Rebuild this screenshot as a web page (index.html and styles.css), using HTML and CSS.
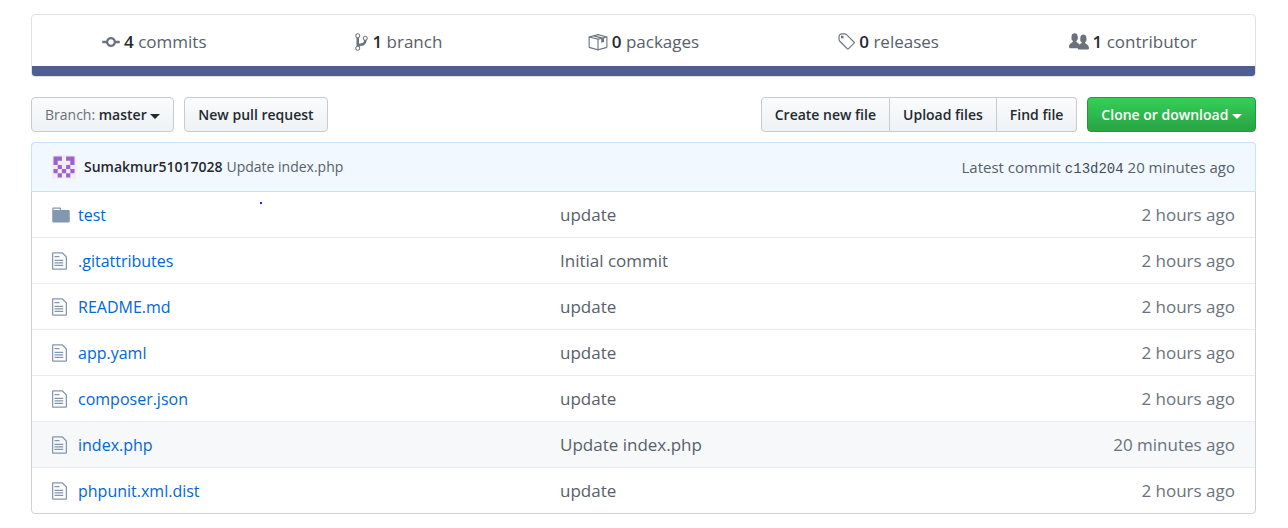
FILE: index.html
```html
<!DOCTYPE html>
<html lang="en">
<head>
<meta charset="utf-8">
<meta name="viewport" content="width=device-width, initial-scale=1">
<title>Repository files</title>
<link rel="stylesheet" href="styles.css">
</head>
<body>
<svg class="sprite" aria-hidden="true">
  <symbol id="file" viewBox="0 0 12 16"><path d="M6 5H2V4h4v1zM2 8h7V7H2v1zm0 2h7V9H2v1zm0 2h7v-1H2v1zm10-7.5V14c0 .55-.45 1-1 1H1c-.55 0-1-.45-1-1V2c0-.55.45-1 1-1h7.5L12 4.5zM11 5L8 2H1v12h10V5z"/></symbol>
</svg>
<main class="page">
  <section class="summary">
    <ul class="stats">
      <li><a class="stat" href="#"><svg class="icon" width="18" height="20" viewBox="0 0 14 16"><path d="M10.86 7c-.45-1.72-2-3-3.86-3-1.86 0-3.41 1.28-3.86 3H0v2h3.14c.45 1.72 2 3 3.86 3 1.86 0 3.41-1.28 3.86-3H14V7h-3.14zM7 10.2c-1.22 0-2.2-.98-2.2-2.2 0-1.22.98-2.2 2.2-2.2 1.22 0 2.2.98 2.2 2.2 0 1.22-.98 2.2-2.2 2.2z"/></svg><span><b>4</b> commits</span></a></li>
      <li><a class="stat" href="#"><svg class="icon" width="13" height="20" viewBox="0 0 10 16"><path d="M10 5c0-1.11-.89-2-2-2a1.993 1.993 0 00-1 3.72v.3c-.02.52-.23.98-.63 1.38-.4.4-.86.61-1.38.63-.83.02-1.48.16-2 .45V4.72a1.993 1.993 0 00-1-3.72C.88 1 0 1.89 0 3a2 2 0 001 1.72v6.56c-.59.35-1 .99-1 1.72 0 1.11.89 2 2 2 1.11 0 2-.89 2-2 0-.53-.2-1-.53-1.36.09-.06.48-.41.59-.47.25-.11.56-.17.94-.17 1.05-.05 1.95-.45 2.75-1.25S8.95 7.77 9 6.73h-.02C9.59 6.37 10 5.73 10 5zM2 1.8c.66 0 1.2.55 1.2 1.2 0 .65-.55 1.2-1.2 1.2C1.35 4.2.8 3.65.8 3c0-.65.55-1.2 1.2-1.2zm0 12.41c-.66 0-1.2-.55-1.2-1.2 0-.65.55-1.2 1.2-1.2.65 0 1.2.55 1.2 1.2 0 .65-.55 1.2-1.2 1.2zm6-8c-.66 0-1.2-.55-1.2-1.2 0-.65.55-1.2 1.2-1.2.65 0 1.2.55 1.2 1.2 0 .65-.55 1.2-1.2 1.2z"/></svg><span><b>1</b> branch</span></a></li>
      <li><a class="stat" href="#"><svg class="icon" width="20" height="20" viewBox="0 0 16 16"><path class="line" d="M.9 4 8 5.8v8.4l-6.5-1.7c-.4-.1-.6-.4-.6-.8zM15.1 4 8 5.8v8.4l6.5-1.7c.4-.1.6-.4.6-.8zM.9 4 8 2.1 15.1 4M4.4 3.1l7.1 1.8"/><path d="M10.6 5.1l2.2-.6v3.4l-2.2.6z"/></svg><span><b>0</b> packages</span></a></li>
      <li><a class="stat" href="#"><svg class="icon" width="18" height="20" viewBox="0 0 14 16"><path d="M7.73 1.73C7.26 1.26 6.62 1 5.96 1H3.5C2.13 1 1 2.13 1 3.5v2.47c0 .66.27 1.3.73 1.77l6.06 6.06c.39.39 1.02.39 1.41 0l4.59-4.59a.996.996 0 000-1.41L7.73 1.73zM2.38 7.09c-.31-.3-.47-.7-.47-1.13V3.5c0-.88.72-1.59 1.59-1.59h2.47c.42 0 .83.16 1.13.47l6.14 6.13-4.73 4.73-6.13-6.15zM3.01 3h2v2H3V3h.01z"/></svg><span><b>0</b> releases</span></a></li>
      <li><a class="stat" href="#"><svg class="icon" width="20" height="20" viewBox="0 0 16 16"><path d="M16 12.999c0 .439-.45 1-1 1H7.995c-.539 0-.994-.447-.995-.999H1c-.54 0-1-.561-1-1 0-2.634 3-4 3-4s.229-.409 0-1c-.841-.621-1.058-.59-1-3 .058-2.419 1.367-3 2.5-3s2.442.58 2.5 3c.058 2.41-.159 2.379-1 3-.229.59 0 1 0 1s1.549.711 2.42 2.088C9.196 9.369 10 8.999 10 8.999s.229-.409 0-1c-.841-.62-1.058-.59-1-3 .058-2.419 1.367-3 2.5-3s2.437.581 2.495 3c.059 2.41-.158 2.38-1 3-.229.59 0 1 0 1s3.005 1.366 3.005 4"/></svg><span><b>1</b> contributor</span></a></li>
    </ul>
    <div class="language-bar"></div>
  </section>

  <div class="toolbar">
    <button class="btn" type="button"><span class="muted">Branch:</span> master <i class="caret"></i></button>
    <button class="btn" type="button">New pull request</button>
    <div class="group">
      <button class="btn" type="button">Create new file</button>
      <button class="btn" type="button">Upload files</button>
      <button class="btn" type="button">Find file</button>
    </div>
    <button class="btn primary" type="button">Clone or download <i class="caret"></i></button>
  </div>

  <section class="files">
    <div class="commit">
      <svg class="avatar" viewBox="0 0 24 24"><rect width="24" height="24" rx="2" fill="#f0eef0"/><path fill="#9c62d0" transform="translate(1.5 1.5) scale(4.2)" d="M0 0h2v1H1v1H0zM3 0h2v2H4V1H3zM1 2h1v1H1zM3 2h1v1H3zM0 3h1v1H0zM2 3h1v1H2zM4 3h1v1H4zM1 4h1v1H1zM3 4h1v1H3z"/></svg>
      <a class="author" href="#">Sumakmur51017028</a>
      <a class="message" href="#">Update index.php</a>
      <span class="latest">Latest commit <a class="sha" href="#">c13d204</a> 20 minutes ago</span>
    </div>
    <table class="list">
      <tbody>
        <tr><td class="name"><span class="entry"><svg class="file-icon" width="18" height="20" viewBox="0 0 14 16"><path d="M13 4H7V3c0-.66-.31-1-1-1H1c-.55 0-1 .45-1 1v10c0 .55.45 1 1 1h12c.55 0 1-.45 1-1V5c0-.55-.45-1-1-1zM6 4H1V3h5v1z"/></svg><a href="#">test</a></span><i class="dot"></i></td><td>update</td><td class="age">2 hours ago</td></tr>
        <tr><td class="name"><span class="entry"><svg class="file-icon" width="15" height="20"><use href="#file"/></svg><a href="#">.gitattributes</a></span></td><td>Initial commit</td><td class="age">2 hours ago</td></tr>
        <tr><td class="name"><span class="entry"><svg class="file-icon" width="15" height="20"><use href="#file"/></svg><a href="#">README.md</a></span></td><td>update</td><td class="age">2 hours ago</td></tr>
        <tr><td class="name"><span class="entry"><svg class="file-icon" width="15" height="20"><use href="#file"/></svg><a href="#">app.yaml</a></span></td><td>update</td><td class="age">2 hours ago</td></tr>
        <tr><td class="name"><span class="entry"><svg class="file-icon" width="15" height="20"><use href="#file"/></svg><a href="#">composer.json</a></span></td><td>update</td><td class="age">2 hours ago</td></tr>
        <tr class="active"><td class="name"><span class="entry"><svg class="file-icon" width="15" height="20"><use href="#file"/></svg><a href="#">index.php</a></span></td><td>Update index.php</td><td class="age">20 minutes ago</td></tr>
        <tr><td class="name"><span class="entry"><svg class="file-icon" width="15" height="20"><use href="#file"/></svg><a href="#">phpunit.xml.dist</a></span></td><td>update</td><td class="age">2 hours ago</td></tr>
      </tbody>
    </table>
  </section>
</main>
</body>
</html>
```
FILE: styles.css
```css
* { box-sizing: border-box; }
body {
  margin: 0;
  background: #fff;
  color: #24292e;
  font: 17px/24px "Segoe UI", "Open Sans", "Noto Sans", sans-serif;
}
a { color: inherit; text-decoration: none; }
.sprite { display: none; }
.page { padding: 14px 32px 14px 31px; }

.summary { border: 1px solid #dfe2e5; border-radius: 4px; overflow: hidden; }
.stats {
  display: grid;
  grid-template-columns: repeat(5, 1fr);
  margin: 0;
  padding: 0;
  list-style: none;
}
.stat {
  display: flex;
  align-items: center;
  justify-content: center;
  gap: 4px;
  height: 51px;
  padding-top: 3px;
  color: #586069;
}
.stat b { color: #24292e; font-weight: 600; }
.icon { fill: #6a737d; flex: none; }
.line { fill: none; stroke: #6a737d; stroke-width: 0.9; }
.language-bar { height: 10px; background: #4f5d95; }

.toolbar { display: flex; gap: 10px; margin: 20px 0 10px; }
.group { display: flex; margin-left: auto; }
.btn {
  height: 35px;
  padding: 0 13px;
  border: 1px solid #c8cbcf;
  border-radius: 4px;
  background: linear-gradient(#fafbfc, #eff3f6 90%);
  color: #24292e;
  font: 600 14px/21px "Segoe UI", "Open Sans", "Noto Sans", sans-serif;
  white-space: nowrap;
}
.muted { color: #6a7076; font-weight: 400; }
.group .btn { border-radius: 0; }
.group .btn + .btn { border-left: 0; }
.group .btn:first-child { border-radius: 4px 0 0 4px; }
.group .btn:last-child { border-radius: 0 4px 4px 0; }
.primary {
  border-color: #28963f;
  background: linear-gradient(#34d058, #28a745 90%);
  color: #fff;
}
.caret {
  display: inline-block;
  border: 5px solid transparent;
  border-top-color: currentColor;
  border-bottom: 0;
  vertical-align: middle;
}

.files { border: 1px solid #cfd2d6; border-radius: 4px; }
.commit {
  display: flex;
  align-items: center;
  gap: 4px;
  height: 50px;
  margin: -1px -1px 0;
  padding: 0 20px;
  border: 1px solid #c8e1ff;
  border-radius: 4px 4px 0 0;
  background: #f1f8ff;
  color: #586069;
  font-size: 14px;
}
.avatar { width: 24px; height: 24px; margin-right: 4px; }
.author { color: #24292e; font-weight: 600; }
.latest { margin-left: auto; font-size: 15px; }
.sha { font: 14px "Liberation Mono", monospace; color: #444d56; }

.list { width: 100%; border-collapse: collapse; table-layout: fixed; }
.list td {
  height: 46px;
  padding: 2px 20px 0 0;
  border-bottom: 1px solid #eaecef;
  color: #586069;
}
.list tr:first-child td { height: 45px; }
.list tr:last-child td { border-bottom: 0; }
.list .name { position: relative; width: 528px; padding-left: 20px; color: #0366d6; font-size: 16px; }
.list .age { width: 200px; color: #6a737d; text-align: right; }
.entry { display: grid; grid-template-columns: 18px auto; gap: 8px; align-items: center; }
.file-icon { fill: #8297b0; }
.active { background: #f6f8fa; }
.dot { position: absolute; top: 10px; left: 228px; width: 2px; height: 2px; background: #2323ff; }
```
